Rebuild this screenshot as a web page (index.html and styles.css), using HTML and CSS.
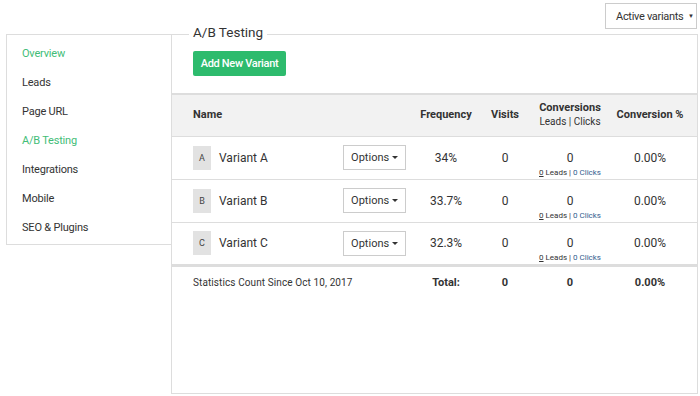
FILE: index.html
```html
<!DOCTYPE html>
<html lang="en">
<head>
    <meta charset="UTF-8">
    <title>A/B Testing</title>
    <link rel="stylesheet" href="styles.css">
</head>
<body>
    <div class="page">
        <div class="toolbar">
            <div class="filter">Active variants <span class="filter-caret">&#9660;</span></div>
        </div>

        <div class="layout">
            <ul class="sidebar">
                <li class="active">Overview</li>
                <li>Leads</li>
                <li>Page URL</li>
                <li class="active">A/B Testing</li>
                <li>Integrations</li>
                <li>Mobile</li>
                <li>SEO &amp; Plugins</li>
            </ul>

            <div class="panel">
                <h2 class="panel-title">A/B Testing</h2>
                <button class="add-button">Add New Variant</button>

                <table class="variants">
                    <colgroup>
                        <col class="col-name">
                        <col class="col-freq">
                        <col class="col-visits">
                        <col class="col-conv">
                        <col class="col-rate">
                    </colgroup>
                    <thead>
                        <tr>
                            <th class="name-head">Name</th>
                            <th>Frequency</th>
                            <th>Visits</th>
                            <th>Conversions<span class="sub-head">Leads | Clicks</span></th>
                            <th>Conversion %</th>
                        </tr>
                    </thead>
                    <tbody>
                        <tr>
                            <td>
                                <div class="variant">
                                    <span class="badge">A</span>
                                    <span class="variant-name">Variant A</span>
                                    <button class="options">Options <span class="caret"></span></button>
                                </div>
                            </td>
                            <td>34%</td>
                            <td>0</td>
                            <td class="conv">0<span class="breakdown"><u>0</u> Leads | <span class="clicks">0 Clicks</span></span></td>
                            <td>0.00%</td>
                        </tr>
                        <tr>
                            <td>
                                <div class="variant">
                                    <span class="badge">B</span>
                                    <span class="variant-name">Variant B</span>
                                    <button class="options">Options <span class="caret"></span></button>
                                </div>
                            </td>
                            <td>33.7%</td>
                            <td>0</td>
                            <td class="conv">0<span class="breakdown"><u>0</u> Leads | <span class="clicks">0 Clicks</span></span></td>
                            <td>0.00%</td>
                        </tr>
                        <tr>
                            <td>
                                <div class="variant">
                                    <span class="badge">C</span>
                                    <span class="variant-name">Variant C</span>
                                    <button class="options">Options <span class="caret"></span></button>
                                </div>
                            </td>
                            <td>32.3%</td>
                            <td>0</td>
                            <td class="conv">0<span class="breakdown"><u>0</u> Leads | <span class="clicks">0 Clicks</span></span></td>
                            <td>0.00%</td>
                        </tr>
                    </tbody>
                    <tfoot>
                        <tr>
                            <td class="since">Statistics Count Since Oct 10, 2017</td>
                            <td class="strong">Total:</td>
                            <td class="strong">0</td>
                            <td class="strong">0</td>
                            <td class="strong">0.00%</td>
                        </tr>
                    </tfoot>
                </table>
            </div>
        </div>
    </div>
</body>
</html>
```

FILE: styles.css
```css
:root {
    --green: #2dbb6d;
    --green-link: #42bd77;
    --line: #dddddd;
    --text: #333333;
    --head-bg: #f2f2f2;
}

* {
    margin: 0;
    padding: 0;
    box-sizing: border-box;
    font-family: 'Roboto', 'Liberation Sans', sans-serif;
}

body {
    background: #ffffff;
    color: var(--text);
}

.page {
    padding: 3px 2px 0 6px;
}

.toolbar {
    display: flex;
    justify-content: flex-end;
    height: 31px;
    padding-right: 1px;
}

.filter {
    height: 26px;
    width: 92px;
    border: 1px solid #cccccc;
    font-size: 11px;
    letter-spacing: -0.3px;
    line-height: 24px;
    padding-left: 10px;
    white-space: nowrap;
    color: #333;
}

.filter-caret {
    font-size: 6px;
    margin-left: 2px;
    vertical-align: 2px;
}

.layout {
    display: flex;
    align-items: flex-start;
}

.sidebar {
    list-style: none;
    width: 166px;
    border: 1px solid var(--line);
    border-right: none;
    padding: 4px 0 2px;
}

.sidebar li {
    font-size: 11px;
    letter-spacing: -0.2px;
    line-height: 29px;
    padding-left: 15px;
    color: #333;
}

.sidebar li.active {
    color: var(--green-link);
}

.panel {
    flex: 1;
    height: 360px;
    border: 1px solid var(--line);
}

.panel-title {
    display: block;
    width: fit-content;
    font-size: 13.5px;
    font-weight: 400;
    line-height: 18px;
    margin: -12px 0 0 17px;
    padding: 0 4px;
    background: #ffffff;
    color: #333;
}

.add-button {
    display: block;
    margin: 10px 0 0 21px;
    height: 25px;
    width: 93px;
    border: none;
    border-radius: 2px;
    background: var(--green);
    color: #ffffff;
    font-size: 11px;
    letter-spacing: -0.3px;
    font-weight: 500;
}

.variants {
    width: 100%;
    margin-top: 17px;
    border-collapse: collapse;
    table-layout: fixed;
}

.col-name { width: 247px; }
.col-freq { width: 54px; }
.col-visits { width: 64px; }
.col-conv { width: 66px; }
.col-rate { width: 94px; }

.variants th {
    background: var(--head-bg);
    border-top: 2px solid var(--line);
    height: 42px;
    font-size: 11px;
    font-weight: 700;
    text-align: center;
    vertical-align: middle;
    line-height: 14px;
}

.variants th.name-head {
    text-align: left;
    padding-left: 21px;
}

.sub-head {
    display: block;
    font-weight: 400;
    font-size: 10px;
}

.variants tbody td {
    height: 43px;
    border-top: 1px solid var(--line);
    font-size: 12px;
    line-height: 14px;
    text-align: center;
    vertical-align: middle;
}

.variants tbody td.conv {
    padding-top: 13px;
}

.variants tbody td:first-child {
    text-align: left;
    padding: 0 13px 0 21px;
}

.variant {
    display: flex;
    align-items: center;
}

.badge {
    width: 18px;
    height: 24px;
    background: #e2e2e2;
    font-size: 9px;
    line-height: 24px;
    text-align: center;
    color: #444;
}

.variant-name {
    margin-left: 8px;
    font-size: 12px;
}

.options {
    margin-left: auto;
    width: 63px;
    height: 25px;
    border: 1px solid #cccccc;
    background: #ffffff;
    font-size: 11px;
    color: #333;
}

.caret {
    display: inline-block;
    border-left: 3px solid transparent;
    border-right: 3px solid transparent;
    border-top: 3px solid #333;
    vertical-align: 2px;
}

.breakdown {
    display: block;
    font-size: 8px;
    line-height: 10px;
    margin-top: 3px;
}

.clicks {
    color: #31608f;
}

.variants tfoot td {
    border-top: 3px solid var(--line);
    height: 33px;
    font-size: 11px;
    text-align: center;
    vertical-align: middle;
}

.variants tfoot td.since {
    text-align: left;
    padding-left: 21px;
    font-size: 10px;
    letter-spacing: 0.1px;
}

.variants tfoot td.strong {
    font-weight: 700;
}
```
